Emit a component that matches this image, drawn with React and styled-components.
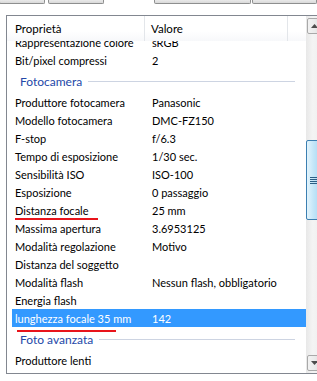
import React from "react";
import styled, { createGlobalStyle } from "styled-components";

const GlobalStyle = createGlobalStyle`
  html, body {
    margin: 0;
    padding: 0;
    background: #ffffff;
    overflow: hidden;
  }
`;

const Page = styled.div`
  position: relative;
  width: 317px;
  height: 381px;
  overflow: hidden;
  background: #ffffff;
  font-family: "Segoe UI", Lato, "Open Sans", sans-serif;
  font-size: 11px;
  color: #000;
`;

const TabStrip = styled.div`
  display: flex;
  height: 4px;
`;

const Tab = styled.div`
  box-sizing: border-box;
  margin-left: ${(p) => p.gap}px;
  width: ${(p) => p.w}px;
  height: 4px;
  background: linear-gradient(#e9e9e9, #d9d9d9);
  border: 1px solid #8e8f8f;
  border-top: none;
  border-radius: 0 0 2px 2px;
`;

const ListBox = styled.div`
  box-sizing: border-box;
  display: flex;
  margin: 11px 0 0 6px;
  width: 330px;
  height: 359px;
  border: 1px solid #828790;
  background: #fff;
`;

const Main = styled.div`
  width: 299px;
  display: flex;
  flex-direction: column;
  overflow: hidden;
`;

const Header = styled.div`
  display: flex;
  height: 25px;
  flex-shrink: 0;
  font-size: 11.5px;
  background: linear-gradient(#ffffff 60%, #f7f8fa);
`;

const HeaderCell = styled.div`
  box-sizing: border-box;
  width: ${(p) => p.w}px;
  padding-left: ${(p) => p.pad || 0}px;
  display: flex;
  align-items: center;
  border-right: 1px solid #e3e6ea;
  &:last-child {
    border-right: none;
  }
`;

const Body = styled.div`
  flex: 1;
  overflow: hidden;
`;

const Rows = styled.div`
  margin-top: -8px;
  padding-left: 5px;
`;

const Row = styled.div`
  display: grid;
  grid-template-columns: 133px 143px;
  height: 18px;
  align-items: center;
  background: ${(p) => (p.selected ? "#3399ff" : "transparent")};
  color: ${(p) => (p.selected ? "#ffffff" : "#000000")};
  white-space: nowrap;
`;

const Name = styled.span`
  padding-left: 3px;
  overflow: hidden;
`;

const Value = styled.span`
  padding-left: 7px;
  overflow: hidden;
`;

const Group = styled.div`
  display: flex;
  align-items: center;
  width: 283px;
  height: 24px;
  padding-left: 8px;
  box-sizing: border-box;
  color: #2448a8;
  font-size: 12px;
  &::after {
    content: "";
    flex: 1;
    height: 1px;
    margin: 1px 0 0 6px;
    background: #cdd4e2;
  }
`;

const ScrollBar = styled.div`
  width: 17px;
  display: flex;
  flex-direction: column;
  align-items: flex-start;
  background: linear-gradient(90deg, #e8e8e8, #f4f4f4 40%, #eeeeee);
`;

const ArrowButton = styled.div`
  box-sizing: border-box;
  width: 15px;
  height: 16px;
  margin: ${(p) => p.m};
  border: 1px solid #a9a9a9;
  border-radius: 2px;
  background: linear-gradient(90deg, #f2f2f2, #ebebeb 50%, #dcdcdc);
  display: flex;
  align-items: center;
  justify-content: center;
`;

const Track = styled.div`
  flex: 1;
  width: 100%;
`;

const Thumb = styled.div`
  box-sizing: border-box;
  width: 15px;
  height: 80px;
  margin-top: 106px;
  border: 1px solid #3c7fb1;
  border-radius: 2px;
  background: linear-gradient(90deg, #e3f4fc, #c4e6f8 50%, #a9d9f4);
  display: flex;
  align-items: center;
  justify-content: center;
`;

const Grip = styled.div`
  width: 7px;
  height: 7px;
  background: repeating-linear-gradient(#2a5f86 0 1px, transparent 1px 2px);
`;

const Underline = styled.div`
  position: absolute;
  left: ${(p) => p.x}px;
  top: ${(p) => p.y}px;
  width: ${(p) => p.w}px;
  height: 2px;
  background: #e8141b;
`;

const Arrow = ({ up }) => (
  <svg width="7" height="4" viewBox="0 0 7 4">
    <path d={up ? "M0 4 L3.5 0 L7 4 Z" : "M0 0 L3.5 4 L7 0 Z"} fill="#4d4d4d" />
  </svg>
);

const items = [
  { name: "Rappresentazione colore", value: "sRGB" },
  { name: "Bit/pixel compressi", value: "2" },
  { group: "Fotocamera" },
  { name: "Produttore fotocamera", value: "Panasonic" },
  { name: "Modello fotocamera", value: "DMC-FZ150" },
  { name: "F-stop", value: "f/6.3" },
  { name: "Tempo di esposizione", value: "1/30 sec." },
  { name: "Sensibilità ISO", value: "ISO-100" },
  { name: "Esposizione", value: "0 passaggio" },
  { name: "Distanza focale", value: "25 mm" },
  { name: "Massima apertura", value: "3.6953125" },
  { name: "Modalità regolazione", value: "Motivo" },
  { name: "Distanza del soggetto", value: "" },
  { name: "Modalità flash", value: "Nessun flash, obbligatorio" },
  { name: "Energia flash", value: "" },
  { name: "lunghezza focale 35 mm", value: "142", selected: true },
  { group: "Foto avanzata" },
  { name: "Produttore lenti", value: "" },
];

const App = () => (
  <>
    <GlobalStyle />
    <Page>
      <TabStrip>
        <Tab gap={-1} w={46} />
        <Tab gap={3} w={57} />
        <Tab gap={50} w={97} />
        <Tab gap={1} w={66} />
      </TabStrip>
      <ListBox>
        <Main>
          <Header>
            <HeaderCell w={138} pad={8}>Proprietà</HeaderCell>
            <HeaderCell w={143} pad={6}>Valore</HeaderCell>
            <HeaderCell w={18} />
          </Header>
          <Body>
            <Rows>
              {items.map((it, i) =>
                it.group ? (
                  <Group key={i}>{it.group}</Group>
                ) : (
                  <Row key={i} selected={it.selected}>
                    <Name>{it.name}</Name>
                    <Value>{it.value}</Value>
                  </Row>
                )
              )}
            </Rows>
          </Body>
        </Main>
        <ScrollBar>
          <ArrowButton m="2px 0 0 1px">
            <Arrow up />
          </ArrowButton>
          <Track>
            <Thumb>
              <Grip />
            </Thumb>
          </Track>
          <ArrowButton m="0 0 2px 1px">
            <Arrow />
          </ArrowButton>
        </ScrollBar>
      </ListBox>
      <Underline x={15} y={218} w={83} />
      <Underline x={17} y={330} w={99} />
    </Page>
  </>
);

export default App;
